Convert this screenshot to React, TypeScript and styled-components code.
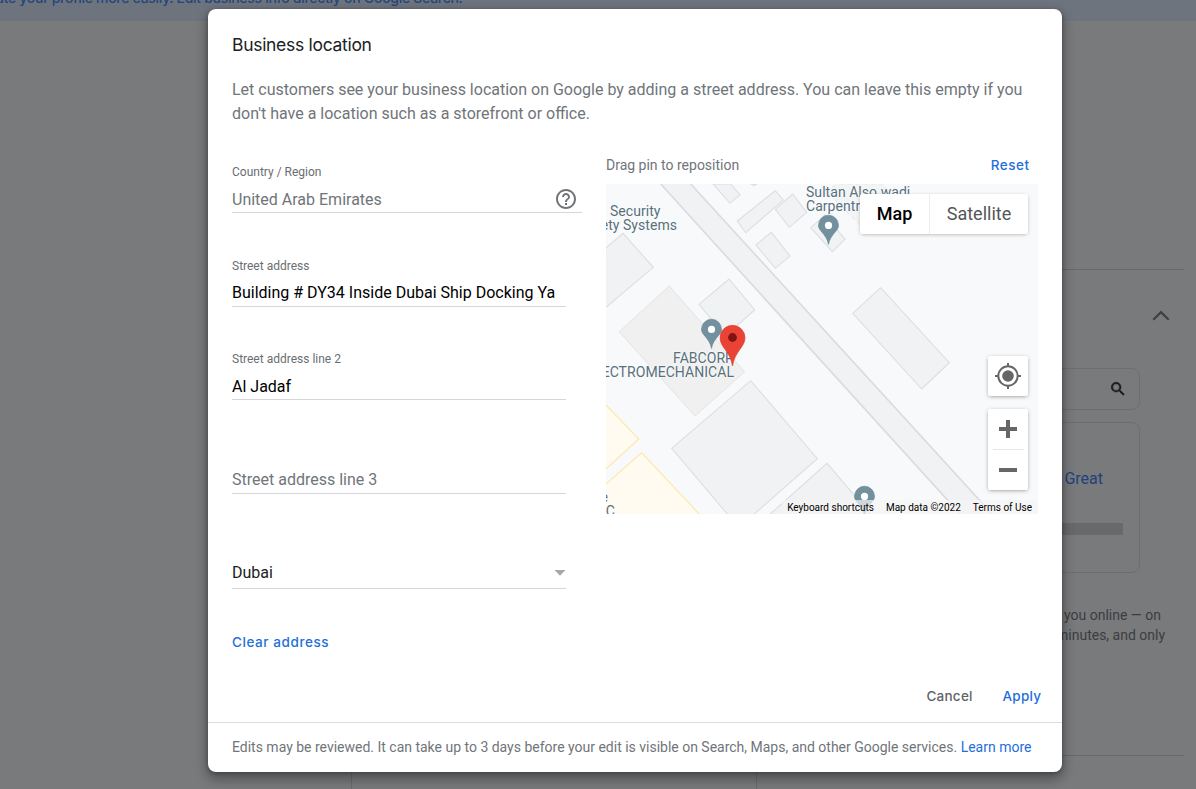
import React from "react";
import styled, { createGlobalStyle } from "styled-components";

const GlobalStyle = createGlobalStyle`
  * { box-sizing: border-box; }
  body { margin: 0; overflow: hidden; background: #797a7c; font-family: Roboto, sans-serif; }
`;

const brand = `"Inter", "Liberation Sans", sans-serif`;

const Page = styled.div`
  position: relative;
  width: 1196px;
  height: 789px;
  overflow: hidden;
  background: #797a7c;
`;

const Banner = styled.div`
  height: 21px;
  background: #6e747e;
  color: #24467a;
  font: 500 14px/20px ${brand};
  white-space: nowrap;
  overflow: hidden;
`;

const BannerText = styled.span`
  display: block;
  margin: -12px 0 0 -4px;
  letter-spacing: -0.29px;
`;

const Backdrop = styled.div`
  display: flex;
  flex-direction: column;
  align-items: flex-end;
  padding-right: 12px;
  height: 768px;
`;

const Section = styled.section`
  width: 360px;
  height: 487px;
  margin-top: 248px;
  border-top: 1px solid #67686a;
  border-bottom: 1px solid #67686a;
  display: flex;
  flex-direction: column;
  flex: none;
`;

const SectionHeader = styled.div`
  height: 98px;
  display: flex;
  justify-content: flex-end;
  padding: 34px 12px 0 0;
`;

const SearchBox = styled.div`
  height: 42px;
  flex: none;
  margin-right: 44px;
  border: 1px solid #6d6e70;
  border-radius: 8px;
  display: flex;
  align-items: center;
  justify-content: flex-end;
  padding-right: 12px;
`;

const Card = styled.div`
  height: 151px;
  flex: none;
  margin: 12px 44px 0 0;
  border: 1px solid #6d6e70;
  border-radius: 8px;
  display: flex;
  flex-direction: column;
  align-items: flex-end;
  padding: 46px 16px 0 0;
`;

const CardTitle = styled.div`
  padding-right: 20px;
  font-size: 16px;
  line-height: 20px;
  color: #20427a;
`;

const CardBar = styled.div`
  width: 180px;
  height: 12px;
  margin-top: 34px;
  background: #69696c;
`;

const Blurb = styled.p`
  margin: 32px 0 0;
  padding-left: 232px;
  font-size: 14px;
  line-height: 20px;
  color: #3c3d40;
  white-space: nowrap;
`;

const BlurbLine = styled.span<{ $shift: number }>`
  display: block;
  padding-left: ${(p) => p.$shift}px;
`;

const Columns = styled.div`
  width: 406px;
  height: 33px;
  margin: 0 427px 0 0;
  border-left: 1px solid #6a6b6d;
  border-right: 1px solid #6a6b6d;
  flex: none;
`;

const Overlay = styled.div`
  position: absolute;
  inset: 0;
  padding: 9px 134px 17px 208px;
`;

const Dialog = styled.div`
  height: 763px;
  background: #fff;
  border-radius: 8px;
  box-shadow: 0 6px 12px 2px rgba(0, 0, 0, 0.3), 0 1px 4px rgba(0, 0, 0, 0.3);
  display: flex;
  flex-direction: column;
`;

const DialogBody = styled.div`
  flex: 1;
  padding: 24px 24px 0;
  display: flex;
  flex-direction: column;
`;

const Title = styled.h1`
  margin: 0;
  font: 400 17.5px/24px ${brand};
  letter-spacing: -0.3px;
  color: #202124;
`;

const Description = styled.p`
  margin: 21px 0 0;
  font-size: 16px;
  line-height: 24px;
  color: #70757a;
  white-space: nowrap;
`;

const Content = styled.div`
  display: flex;
  gap: 24px;
  margin-top: 24px;
`;

const Form = styled.div`
  width: 350px;
  flex: none;
`;

const Field = styled.div<{ $height: number; $wide?: boolean }>`
  width: ${(p) => (p.$wide ? 350 : 334)}px;
  height: ${(p) => p.$height}px;
  border-bottom: 1px solid #d5d7da;
  display: flex;
  flex-direction: column;
  justify-content: flex-end;
`;

const Label = styled.div`
  font-size: 12px;
  line-height: 16px;
  color: #6a6e73;
  margin-bottom: 6px;
`;

const Value = styled.div<{ $tone?: string; $lift?: number; $drop?: number }>`
  height: 26px;
  margin-bottom: ${(p) => p.$lift ?? 0}px;
  padding-top: ${(p) => p.$drop ?? 0}px;
  display: flex;
  align-items: center;
  justify-content: space-between;
  font-size: 16px;
  line-height: 26px;
  white-space: nowrap;
  color: ${(p) => p.$tone ?? "#000"};
`;

const HelpIcon = styled.svg`
  width: 24px;
  height: 24px;
  margin: -2px 4px 0 0;
`;

const TextButton = styled.button<{ $tone?: string; $track?: number }>`
  border: 0;
  padding: 0;
  background: none;
  font: 500 13.5px/20px ${brand};
  letter-spacing: ${(p) => p.$track ?? 0}px;
  margin-right: -${(p) => p.$track ?? 0}px;
  color: ${(p) => p.$tone ?? "#1f6fdb"};
  white-space: nowrap;
`;

const ClearRow = styled.div`
  padding-top: 43px;
  display: flex;
`;

const MapColumn = styled.div`
  width: 432px;
  flex: none;
`;

const MapHeader = styled.div`
  height: 34px;
  padding: 5px 9px 0 0;
  display: flex;
  justify-content: space-between;
  align-items: flex-start;
  font-size: 14px;
  line-height: 20px;
  color: #70757a;
`;

const MapFrame = styled.div`
  position: relative;
  width: 432px;
  height: 330px;
  overflow: hidden;
  background: #f8f9fb;
`;

const MapDrawing = styled.svg`
  display: block;
  width: 432px;
  height: 330px;
`;

const MapLabel = styled.div<{ $x: number; $y: number; $right?: boolean }>`
  position: absolute;
  left: ${(p) => p.$x}px;
  top: ${(p) => p.$y}px;
  ${(p) => (p.$right ? "transform: translateX(-100%); text-align: right;" : "")}
  font-size: 14px;
  line-height: 14px;
  letter-spacing: 0.05px;
  color: #56707c;
  white-space: pre;
  text-shadow: 0 0 2px #fff, 0 0 2px #fff;
`;

const PinLayer = styled.svg`
  position: absolute;
  inset: 0;
  width: 432px;
  height: 330px;
`;

const TypeSwitch = styled.div`
  position: absolute;
  left: 254px;
  top: 10px;
  display: flex;
  height: 40px;
  background: #fff;
  border-radius: 2px;
  box-shadow: 0 1px 4px -1px rgba(0, 0, 0, 0.35);
`;

const TypeOption = styled.div<{ $width: number; $active?: boolean }>`
  width: ${(p) => p.$width}px;
  text-align: center;
  font-size: 18px;
  line-height: 40px;
  font-weight: ${(p) => (p.$active ? 500 : 400)};
  color: ${(p) => (p.$active ? "#000" : "#565656")};
  & + & { border-left: 1px solid #ececec; }
`;

const MapControls = styled.div`
  position: absolute;
  left: 382px;
  top: 172px;
  width: 40px;
  display: flex;
  flex-direction: column;
  gap: 13px;
`;

const ControlBox = styled.div`
  background: #fff;
  border-radius: 2px;
  box-shadow: 0 1px 4px -1px rgba(0, 0, 0, 0.5);
  svg { display: block; }
`;

const Credits = styled.div`
  position: absolute;
  right: 0;
  bottom: 0;
  height: 14px;
  padding: 1px 6px 0 5px;
  display: flex;
  gap: 12px;
  background: rgba(245, 245, 245, 0.7);
  font-size: 10px;
  line-height: 14px;
  color: #000;
  white-space: nowrap;
`;

const Actions = styled.div`
  margin-top: auto;
  height: 36px;
  flex: none;
  margin-right: -3px;
  display: flex;
  justify-content: flex-end;
  gap: 30px;
  align-items: flex-start;
`;

const Footer = styled.div`
  height: 50px;
  flex: none;
  border-top: 1px solid #dadce0;
  padding: 14px 24px 0;
  font-size: 14px;
  line-height: 20px;
  letter-spacing: -0.006px;
  color: #70757a;
  white-space: nowrap;
`;

const Link = styled.span`
  color: #1f6fdb;
`;

const buildings = [
  "713,184 730,203.3 740,194.7 730.7,184",
  "751,184 754,185.7 757,184",
  "737.3,221 775.3,190.7 783.3,200 745.7,232.7",
  "775.3,209.3 792.7,194 806.7,212.3 789.3,227.3",
  "756,245 771.3,232.3 790,256 775.3,268.3",
  "810.7,227.7 832.3,251.7 845,239.3 825,215",
  "590,262 623,233.3 653.3,267.3 606,307.3 590,320",
  "699,304.3 729,279 754.7,310 725,336",
  "671.7,448.3 750.7,380.7 817.3,458.7 752,516 729,516",
  "768,516 827,463.3 872,516",
  "852.7,313.3 880.7,287.7 949.3,362.7 921.7,389",
];

const Poi = ({ x, y }: { x: number; y: number }) => (
  <g transform={`translate(${x} ${y})`}>
    <path
      d="M0 0C-1.2-6-3.5-8.5-6.5-12.2C-8.6-14.6-10-16.5-10-19.2A10 10 0 0 1 10-19.2C10-16.5 8.6-14.6 6.5-12.2C3.5-8.5 1.2-6 0 0Z"
      fill="#72909d"
      stroke="#607d8b"
      strokeWidth="0.6"
    />
    <circle cy="-19" r="3.6" fill="#fff" />
  </g>
);

function LocationMap() {
  return (
    <MapFrame>
      <MapDrawing viewBox="606 184 432 330">
        <path d="M660.7 184L962 516H994L690.7 184Z" fill="#f1f2f4" />
        <path d="M660.7 184L962 516M690.7 184L994 516" stroke="#dadcdf" strokeWidth="1.7" fill="none" />
        <polygon points="825,190 838,184 883,184 894,197 860,225" fill="#f3f4f5" stroke="#e3e5e7" strokeDasharray="4 4" />
        {buildings.map((points) => (
          <polygon key={points} points={points} fill="#f1f2f4" stroke="#dcdee1" strokeWidth="1.1" />
        ))}
        <polygon points="619.3,331.7 669.3,286 744.7,371.7 695,416" fill="#f0f0f0" stroke="#e4e4e4" />
        <path d="M606 405L638.7 439L606 469Z" fill="#fffbf0" />
        <path d="M606 405L638.7 439L606 469" fill="none" stroke="#fde9b4" strokeWidth="1.3" />
        <path d="M606 484L641.7 452.7L701 516H606Z" fill="#fffbf0" />
        <path d="M606 484L641.7 452.7L701 516" fill="none" stroke="#fde9b4" strokeWidth="1.3" />
      </MapDrawing>
      <MapLabel $x={4} $y={20.4}>Security</MapLabel>
      <MapLabel $x={71} $y={34.4} $right>Safety Systems</MapLabel>
      <MapLabel $x={200} $y={1.4}>{"Sultan Also wadi\nCarpentry"}</MapLabel>
      <MapLabel $x={128} $y={167.4} $right>FABCORP</MapLabel>
      <MapLabel $x={128} $y={181.4} $right>ELECTROMECHANICAL</MapLabel>
      <MapLabel $x={2} $y={306.4} $right>The</MapLabel>
      <MapLabel $x={9} $y={320.4} $right>LLC</MapLabel>
      <PinLayer viewBox="606 184 432 330">
        <Poi x={828.5} y={244.4} />
        <Poi x={711.5} y={348.4} />
        <Poi x={864.5} y={515.4} />
        <path
          d="M732.5 366C731.3 359 728.6 354.3 725 349.3C722.3 345.5 720 342.4 720 337.8A12.5 12.5 0 0 1 745 337.8C745 342.4 742.7 345.5 740 349.3C736.4 354.3 733.7 359 732.5 366Z"
          fill="#ea4335"
          stroke="#d73a2e"
          strokeWidth="0.6"
        />
        <circle cx="732.5" cy="337.5" r="4.4" fill="#811411" />
      </PinLayer>
      <TypeSwitch>
        <TypeOption $width={69} $active>Map</TypeOption>
        <TypeOption $width={99}>Satellite</TypeOption>
      </TypeSwitch>
      <MapControls>
        <ControlBox>
          <svg width="40" height="40" viewBox="0 0 40 40">
            <circle cx="20" cy="20" r="9.7" fill="none" stroke="#666" strokeWidth="2" />
            <circle cx="20" cy="20" r="5.8" fill="#666" />
            <path d="M20 7V11M20 29V33M7 20H11M29 20H33" stroke="#666" strokeWidth="2" />
          </svg>
        </ControlBox>
        <ControlBox>
          <svg width="40" height="81" viewBox="0 0 40 81">
            <path d="M20 11V29M11 20H29M11 61H29" stroke="#666" strokeWidth="4" />
            <path d="M5 40.5H36" stroke="#e6e6e6" />
          </svg>
        </ControlBox>
      </MapControls>
      <Credits>
        <span>Keyboard shortcuts</span>
        <span>Map data ©2022</span>
        <span>Terms of Use</span>
      </Credits>
    </MapFrame>
  );
}

export default function App() {
  return (
    <Page>
      <GlobalStyle />
      <Banner>
        <BannerText>ate your profile more easily. Edit business info directly on Google Search.</BannerText>
      </Banner>
      <Backdrop>
        <Section>
          <SectionHeader>
            <svg width="24" height="24" viewBox="0 0 24 24">
              <path d="M5.3 15.8L13 8.1L20.7 15.8" fill="none" stroke="#3f4042" strokeWidth="2.2" />
            </svg>
          </SectionHeader>
          <SearchBox>
            <svg width="18" height="18" viewBox="0 0 24 24">
              <path
                fill="#17181a"
                stroke="#17181a"
                strokeWidth="0.7"
                d="M15.5 14h-.79l-.28-.27A6.47 6.47 0 0 0 16 9.5 6.5 6.5 0 1 0 9.5 16c1.61 0 3.09-.59 4.23-1.57l.27.28v.79l5 4.99L20.49 19l-4.99-5zm-6 0a4.5 4.5 0 1 1 0-9 4.5 4.5 0 0 1 0 9z"
              />
            </svg>
          </SearchBox>
          <Card>
            <CardTitle>Great</CardTitle>
            <CardBar />
          </Card>
          <Blurb>
            <BlurbLine $shift={8}>you online — on</BlurbLine>
            <BlurbLine $shift={0}>minutes, and only</BlurbLine>
          </Blurb>
        </Section>
        <Columns />
      </Backdrop>
      <Overlay>
        <Dialog>
          <DialogBody>
            <Title>Business location</Title>
            <Description>
              Let customers see your business location on Google by adding a street address. You can leave this empty if you
              <br />
              don't have a location such as a storefront or office.
            </Description>
            <Content>
              <Form>
                <Field $height={63} $wide>
                  <Label>Country / Region</Label>
                  <Value $tone="#70757a" $drop={2}>
                    United Arab Emirates
                    <HelpIcon viewBox="0 0 24 24">
                      <path
                        fill="#70757a"
                        d="M11 18h2v-2h-2v2zm1-16C6.48 2 2 6.48 2 12s4.48 10 10 10 10-4.48 10-10S17.52 2 12 2zm0 18c-4.41 0-8-3.59-8-8s3.59-8 8-8 8 3.59 8 8-3.59 8-8 8zm0-14c-2.21 0-4 1.79-4 4h2c0-1.1.9-2 2-2s2 .9 2 2c0 2-3 1.75-3 5h2c0-2.25 3-2.5 3-5 0-2.21-1.79-4-4-4z"
                      />
                    </HelpIcon>
                  </Value>
                </Field>
                <Field $height={94}>
                  <Label>Street address</Label>
                  <Value>Building # DY34 Inside Dubai Ship Docking Ya</Value>
                </Field>
                <Field $height={93}>
                  <Label>Street address line 2</Label>
                  <Value $drop={2}>Al Jadaf</Value>
                </Field>
                <Field $height={94}>
                  <Value $tone="#70757a">Street address line 3</Value>
                </Field>
                <Field $height={95}>
                  <Value $tone="#202124" $lift={2}>
                    Dubai
                    <svg width="12" height="6" viewBox="0 0 12 6">
                      <path d="M0.5 0H11.5L6 5.8Z" fill="#a8a8a8" />
                    </svg>
                  </Value>
                </Field>
                <ClearRow>
                  <TextButton $track={0.58}>Clear address</TextButton>
                </ClearRow>
              </Form>
              <MapColumn>
                <MapHeader>
                  Drag pin to reposition
                  <TextButton $track={0.5}>Reset</TextButton>
                </MapHeader>
                <LocationMap />
              </MapColumn>
            </Content>
            <Actions>
              <TextButton $tone="#5f6368" $track={0.25}>Cancel</TextButton>
              <TextButton $track={0.25}>Apply</TextButton>
            </Actions>
          </DialogBody>
          <Footer>
            Edits may be reviewed. It can take up to 3 days before your edit is visible on Search, Maps, and other Google services.{" "}
            <Link>Learn more</Link>
          </Footer>
        </Dialog>
      </Overlay>
    </Page>
  );
}
